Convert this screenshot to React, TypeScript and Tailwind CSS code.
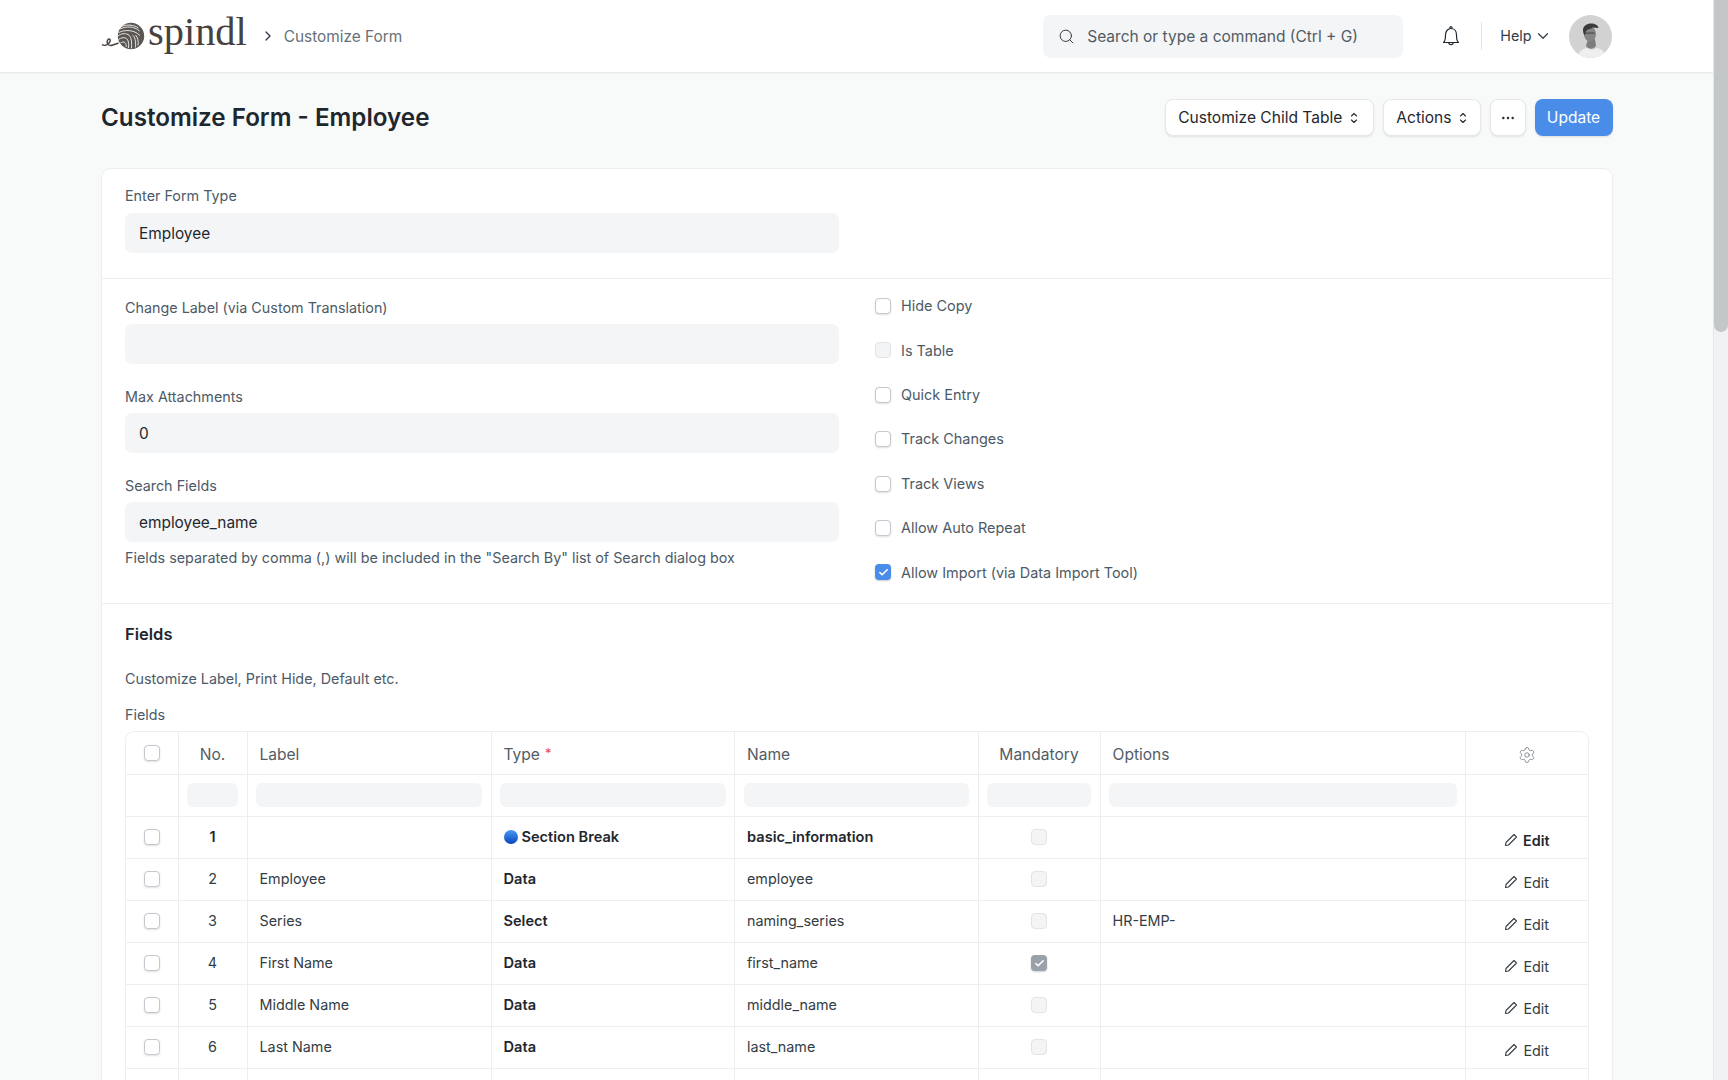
import React from 'react';
import { ChevronDown, ChevronRight, Ellipsis, Search, Settings, Check } from 'lucide-react';

const sideChecks = [
  { label: 'Hide Copy' },
  { label: 'Is Table', disabled: true },
  { label: 'Quick Entry' },
  { label: 'Track Changes' },
  { label: 'Track Views' },
  { label: 'Allow Auto Repeat' },
  { label: 'Allow Import (via Data Import Tool)', checked: true },
];

const rows = [
  { no: '1', label: '', type: 'Section Break', name: 'basic_information', options: '', strong: true },
  { no: '2', label: 'Employee', type: 'Data', name: 'employee', options: '' },
  { no: '3', label: 'Series', type: 'Select', name: 'naming_series', options: 'HR-EMP-' },
  { no: '4', label: 'First Name', type: 'Data', name: 'first_name', options: '', mandatory: true },
  { no: '5', label: 'Middle Name', type: 'Data', name: 'middle_name', options: '' },
  { no: '6', label: 'Last Name', type: 'Data', name: 'last_name', options: '' },
];

const gridCols = 'grid grid-cols-[52.5px_69px_244px_243.5px_243.5px_122px_365.5px_1fr]';
const cell = 'border-r border-[#eceef0] flex items-center';

const Box = ({ checked, disabled }: { checked?: boolean; disabled?: boolean }) => {
  if (checked) {
    return (
      <span className={`w-4 h-4 rounded-[4px] flex items-center justify-center shadow-[0_1px_2px_rgba(0,0,0,0.2)] ${disabled ? 'bg-[#9aa1ab]' : 'bg-[#4a8de9]'}`}>
        <Check size={11} strokeWidth={3.5} className="text-white" />
      </span>
    );
  }
  if (disabled) {
    return <span className="w-4 h-4 rounded-[4px] bg-[#f3f4f5] border border-[#e2e4e6]" />;
  }
  return <span className="w-4 h-4 rounded-[4px] bg-white border border-[#c3c8ce] shadow-[0_1px_2px_rgba(0,0,0,0.12)]" />;
};

const Field = ({ label, value, className }: { label: string; value?: string; className?: string }) => (
  <div className={className}>
    <div className="h-5 leading-5 text-[#4c5a67]">{label}</div>
    <div className="mt-[6px] h-10 w-[714px] rounded-[7px] bg-[#f4f5f6] px-[14px] pt-[1px] flex items-center text-[#1f272e] text-[15.4px]">{value}</div>
  </div>
);

const ToolButton = ({ children }: { children: React.ReactNode }) => (
  <button className="h-[37px] px-3 pt-[2px] rounded-[8px] bg-white border border-[#e6e8ea] shadow-[0_1px_2px_rgba(0,0,0,0.1)] flex items-center gap-[7px] text-[15.55px] text-[#1f272e]">
    {children}
  </button>
);

const UpDownIcon = ({ className }: { className?: string }) => (
  <svg width="8" height="12" viewBox="0 0 8 12" fill="none" stroke="#1f272e" strokeWidth="1.100" strokeLinecap="round" strokeLinejoin="round" className={className}>
    <path d="M1.500 4 L4 1.500 L6.500 4" />
    <path d="M1.500 8 L4 10.500 L6.500 8" />
  </svg>
);

const EditIcon = () => (
  <svg width="14" height="14" viewBox="0 0 14 14" fill="none" stroke="#333c44" strokeWidth="1.100" strokeLinejoin="round">
    <path d="M10 1.500 L12.500 4 L4.500 12 L1.500 12.500 L2 9.500 Z" />
  </svg>
);

const BellIcon = () => (
  <svg width="18" height="22" viewBox="0 0 18 22" fill="none" stroke="#1f272e" strokeWidth="1.200" strokeLinejoin="round">
    <path d="M1.500 17.500 C3.500 16 3.500 13 3.500 10 C3.500 6 6 3.500 9 3.500 C12 3.500 14.500 6 14.500 10 C14.500 13 14.500 16 16.500 17.500 Z" />
    <path d="M7.800 3.600 C7.800 2.400 8.300 1.700 9 1.700 C9.700 1.700 10.200 2.400 10.200 3.600" />
    <path d="M6.800 17.500 C6.800 20.300 11.200 20.300 11.200 17.500" />
  </svg>
);

const Logo = () => (
  <div className="flex items-center">
    <svg width="46" height="30" viewBox="0 0 46 30" fill="none">
      <path d="M1 23.500c2 1.500 5 .8 7-1.500 1.600-1.800 1.600-3.800.3-4-1.700-.2-2.800 2.500-1.800 4.500 1 2 3.500 2.200 5.500 1.500 2-.7 4-1.500 5.500-2" stroke="#4a4542" strokeWidth="1.500" />
      <circle cx="30" cy="15" r="13.200" fill="#5a5653" />
      <g stroke="#e6e3e0" strokeWidth="1" fill="none">
        <path d="M20.500 5.500c5-2.200 12-2 17 1.500" />
        <path d="M19 8c6-3 14-3 19.500 2" />
        <path d="M17.800 11.500c6-3 15-3 21.200 3" />
        <path d="M17 15c3-2.500 7-3 10-1.500 3 1.500 4 6 3.500 14" />
        <path d="M17.500 18.500c3-2 6-2.500 8-1 2 1.500 2.500 5 2 9.500" />
        <path d="M19.500 22c1.500-1 3.500-1.500 4.500-.5 1 1 1.500 2.500 1 4.500" />
        <path d="M31.500 14c2.500 2 3.500 6 3 12.500" />
        <path d="M34.500 14c2.500 2.500 3 6 2.500 10.500" />
      </g>
    </svg>
    <span className="font-['Liberation_Serif',serif] text-[40.4px] leading-none text-[#46413e] ml-[1px] -mt-[7px]">spindl</span>
  </div>
);

const Avatar = () => (
  <svg width="43" height="43" viewBox="0 0 43 43" className="rounded-full">
    <rect width="43" height="43" fill="#d2d2d2" />
    <g className="blur-[0.6px]">
      <path d="M8 43c1-6 5-9 10-10l5 2 5-2c5 1 8 4 9 10z" fill="#efefef" />
      <path d="M17 31l2-7h7l1 7c-2 3-7 4-10 0z" fill="#7d7d7d" />
      <ellipse cx="21" cy="19" rx="6" ry="7.500" fill="#858585" />
      <path d="M14 15c0-4 4-6.500 8-6.500s7 1.500 7.500 4.500c-2 0-4-.5-6-.5-1 2-5 1-6 3-1 1-1 4-1.500 5-1.500-1-2-3.500-2-5.500z" fill="#3a3a3a" />
      <path d="M16.500 17.500h9v1.200h-9z" fill="#4a4a4a" />
    </g>
  </svg>
);

export default function App() {
  return (
    <div className="h-screen overflow-hidden flex bg-[#f8f9f9] font-['Inter',sans-serif] text-[14.35px] text-[#1f272e]">
      <div className="flex-1 min-w-0">
        {/* Navbar */}
        <nav className="h-[73px] bg-white border-b border-[#e8eaec] shadow-[0_1px_2px_rgba(0,0,0,0.03)]">
          <div className="w-[1511.5px] ml-[101px] h-[72px] flex items-center">
            <Logo />
            <ChevronRight size={16} strokeWidth={2} className="ml-[13px] text-[#333c44]" />
            <span className="ml-[8px] mt-[2px] text-[15.4px] text-[#687178]">Customize Form</span>

            <div className="ml-auto w-[360px] h-[43px] rounded-[8px] bg-[#f4f5f6] flex items-center px-[15px] text-[15.53px] text-[#525c65]">
              <Search size={17} strokeWidth={1.4} className="text-[#333c44]" />
              <span className="ml-[12px] mt-[2px]">Search or type a command (Ctrl + G)</span>
            </div>
            <div className="ml-[39px]"><BellIcon /></div>
            <div className="ml-[21px] w-px h-[28px] bg-[#e2e4e6]" />
            <span className="ml-[18px] text-[14.35px] text-[#333c44]">Help</span>
            <ChevronDown size={18} strokeWidth={1.6} className="ml-[2px] text-[#333c44]" />
            <div className="ml-[17px] mr-[1px]"><Avatar /></div>
          </div>
        </nav>

        <main className="w-[1511.5px] ml-[101px]">
          {/* Page head */}
          <div className="h-[88px] mb-[7px] flex items-center justify-between">
            <h1 className="mt-[2px] text-[24.2px] leading-none font-semibold text-[#1f272e]">Customize Form - Employee</h1>
            <div className="flex gap-[9px]">
              <ToolButton>Customize Child Table <UpDownIcon className="ml-[1px] mr-[3px]" /></ToolButton>
              <ToolButton>Actions <UpDownIcon className="mr-[1px]" /></ToolButton>
              <ToolButton><span className="-mx-[3px]"><Ellipsis size={16} strokeWidth={1.6} /></span></ToolButton>
              <button className="h-[37px] w-[78px] pt-[2px] rounded-[8px] bg-[#4a8de9] shadow-[0_1px_2px_rgba(0,0,0,0.12)] text-[15.55px] text-white">Update</button>
            </div>
          </div>

          <div className="bg-white rounded-t-[10px] border border-[#eceef0] shadow-[0_1px_2px_rgba(0,0,0,0.03)]">
            <section className="px-[23px] pt-[17px] pb-[25px]">
              <div className="h-5 leading-5 text-[#4c5a67]">Enter Form Type</div>
              <div className="mt-[7px] h-10 w-[714px] rounded-[7px] bg-[#f4f5f6] px-[14px] pt-[1px] flex items-center text-[15.4px]">Employee</div>
            </section>

            <section className="border-t border-[#eeeff1] px-[23px] pt-[19px] pb-[22.5px] flex">
              <div className="w-[750px]">
                <Field label="Change Label (via Custom Translation)" />
                <Field label="Max Attachments" value="0" className="mt-[23px]" />
                <Field label="Search Fields" value="employee_name" className="mt-[23px]" />
                <p className="mt-[6px] h-5 leading-5 text-[#4c5a67]">Fields separated by comma (,) will be included in the "Search By" list of Search dialog box</p>
              </div>
              <div className="flex flex-col gap-[28.400px]">
                {sideChecks.map((c) => (
                  <label key={c.label} className="flex items-center gap-[10px] h-4 text-[14.45px] text-[#4c5a67]">
                    <Box checked={c.checked} disabled={c.disabled} />
                    {c.label}
                  </label>
                ))}
              </div>
            </section>

            <section className="border-t border-[#eeeff1] px-[23px]">
              <h2 className="mt-[19px] h-[22px] leading-[22px] text-[16.5px] font-semibold">Fields</h2>
              <p className="mt-[24px] h-5 leading-5 text-[#4c5a67]">Customize Label, Print Hide, Default etc.</p>
              <div className="mt-[16px] h-5 leading-5 text-[#4c5a67]">Fields</div>

              <div className="mt-[6px] rounded-t-[9px] border border-b-0 border-[#eceef0]">
                <div className={`${gridCols} h-[43px] border-b border-[#eceef0] text-[15.55px] text-[#525c65]`}>
                  <div className={`${cell} justify-center`}><Box /></div>
                  <div className={`${cell} justify-center pt-[3px]`}>No.</div>
                  <div className={`${cell} px-3 pt-[3px]`}>Label</div>
                  <div className={`${cell} px-3 pt-[3px]`}>Type<span className="ml-[5px] text-[#e24c4c] text-[13px] -mt-[2px]">*</span></div>
                  <div className={`${cell} px-3 pt-[3px]`}>Name</div>
                  <div className={`${cell} justify-center pt-[3px]`}>Mandatory</div>
                  <div className={`${cell} px-3 pt-[3px]`}>Options</div>
                  <div className="flex items-center justify-center pt-[4px]"><Settings size={18} strokeWidth={1} className="text-[#687178]" /></div>
                </div>

                <div className={`${gridCols} h-[42px] border-b border-[#eceef0]`}>
                  <div className={cell} />
                  {[0, 1, 2, 3, 4, 5].map((i) => (
                    <div key={i} className={`${cell} px-[8.5px]`}>
                      <div className="w-full h-6 rounded-[6px] bg-[#f4f5f6]" />
                    </div>
                  ))}
                  <div />
                </div>

                {rows.map((r) => (
                  <div key={r.no} className={`${gridCols} h-[42px] border-b border-[#eceef0] text-[#333c44]`}>
                    <div className={`${cell} justify-center`}><Box /></div>
                    <div className={`${cell} justify-center pb-[1px] ${r.strong ? 'font-semibold text-[#1f272e]' : ''}`}>{r.no}</div>
                    <div className={`${cell} px-3 pb-[1px]`}>{r.label}</div>
                    <div className={`${cell} px-3 pt-[2px] font-semibold text-[14.6px] text-[#1f272e]`}>
                      {r.strong && <span className="w-[14px] h-[14px] rounded-full bg-linear-to-b from-[#4a9bf2] to-[#0b43bd] mr-[4px] -mt-[2px]" />}
                      {r.type}
                    </div>
                    <div className={`${cell} px-3 ${r.strong ? 'pt-[2px] font-semibold text-[14.6px] text-[#1f272e]' : 'pb-[1px]'}`}>{r.name}</div>
                    <div className={`${cell} justify-center`}><Box disabled checked={r.mandatory} /></div>
                    <div className={`${cell} px-3 pb-[1px]`}>{r.options}</div>
                    <div className={`flex items-center justify-center gap-[5px] pt-[6px] ${r.strong ? 'font-semibold text-[#1f272e]' : ''}`}>
                      <EditIcon />Edit
                    </div>
                  </div>
                ))}

                <div className={`${gridCols} h-[42px]`}>
                  {[0, 1, 2, 3, 4, 5, 6].map((i) => <div key={i} className={cell} />)}
                  <div />
                </div>
              </div>
            </section>
          </div>
        </main>
      </div>

      {/* Scrollbar */}
      <div className="w-[15px] shrink-0 bg-[#f1f2f3] border-l border-[#e6e8ea]">
        <div className="h-[332px] bg-[#c3c7ca] rounded-b-[7px]" />
      </div>
    </div>
  );
}
